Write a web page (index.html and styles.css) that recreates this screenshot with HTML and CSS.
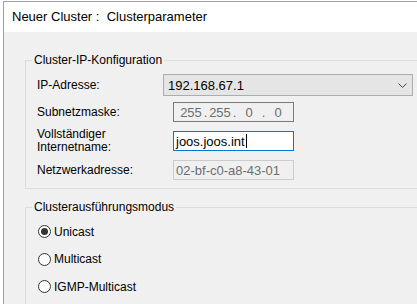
FILE: index.html
```html
<!DOCTYPE html>
<html lang="de">
<head>
    <meta charset="UTF-8">
    <title>Neuer Cluster : Clusterparameter</title>
    <link rel="stylesheet" href="styles.css">
</head>
<body>
    <div class="window">
        <div class="header">Neuer Cluster : &nbsp;Clusterparameter</div>
        <div class="content">
            <fieldset class="group">
                <legend>Cluster-IP-Konfiguration</legend>
                <div class="rows">
                    <label>IP-Adresse:</label>
                    <div class="combo">
                        <span>192.168.67.1</span>
                        <svg width="9" height="5" viewBox="0 0 9 5"><path d="M0.5 0.5 L4.5 4.5 L8.5 0.5" fill="none" stroke="#444" stroke-width="1"/></svg>
                    </div>

                    <label>Subnetzmaske:</label>
                    <div class="field ip">
                        <span class="octet">255</span><span class="dot">.</span>
                        <span class="octet">255</span><span class="dot">.</span>
                        <span class="octet">0</span><span class="dot">.</span>
                        <span class="octet">0</span>
                    </div>

                    <label class="two-line">Vollständiger<br>Internetname:</label>
                    <div class="field focus">joos.joos.int<span class="caret"></span></div>

                    <label>Netzwerkadresse:</label>
                    <div class="field disabled">02-bf-c0-a8-43-01</div>
                </div>
            </fieldset>

            <fieldset class="group mode">
                <legend>Clusterausführungsmodus</legend>
                <div class="radio checked"><span class="circle"></span>Unicast</div>
                <div class="radio"><span class="circle"></span>Multicast</div>
                <div class="radio"><span class="circle"></span>IGMP-Multicast</div>
            </fieldset>
        </div>
    </div>
</body>
</html>
```

FILE: styles.css
```css
html, body {
    margin: 0;
    height: 100%;
    overflow: hidden;
}
body {
    box-sizing: border-box;
    font-family: "Segoe UI", "Liberation Sans", Arial, sans-serif;
    font-size: 12px;
    color: #000;
    background: #fff;
    padding: 1px 0 0 3px;
}
.window {
    box-sizing: border-box;
    height: 100%;
    border-top: 1px solid #a0a0a0;
    border-left: 1px solid #a0a0a0;
    display: flex;
    flex-direction: column;
    overflow: hidden;
}
.header {
    background: #fff;
    height: 30px;
    line-height: 29px;
    padding-left: 8px;
    font-size: 13px;
    flex-shrink: 0;
}
.content {
    flex: 1;
    background: #f0f0f0;
    padding: 20px 0 0 21px;
}
.group {
    margin: 0;
    border: 1px solid #dcdcdc;
    border-right: none;
    padding: 0 0 0 11px;
}
.group legend {
    margin-left: -5px;
    padding: 0 2px;
    line-height: 16px;
}
.rows {
    display: grid;
    grid-template-columns: 126px 250px;
    grid-template-rows: 22px 20px 26px 20px;
    row-gap: 6px;
    align-items: center;
    padding: 6px 0 8px;
}
.rows label {
    line-height: 13px;
}
.combo {
    height: 22px;
    box-sizing: border-box;
    background: #e5e5e5;
    border: 1px solid #adadad;
    display: flex;
    align-items: center;
    justify-content: space-between;
    padding: 0 5px 0 4px;
    font-size: 13px;
}
.field {
    margin-left: 10px;
    width: 121px;
    height: 20px;
    box-sizing: border-box;
    border: 1px solid #7a7a7a;
    display: flex;
    align-items: center;
    padding-left: 2px;
}
.ip {
    color: #6d6d6d;
    background: #f0f0f0;
    padding-left: 6px;
    font-size: 13px;
}
.octet {
    width: 22px;
    text-align: center;
}
.dot {
    width: 7px;
    text-align: center;
}
.focus {
    background: #fff;
    border-color: #0078d7;
    font-size: 13px;
}
.caret {
    display: inline-block;
    width: 1px;
    height: 14px;
    background: #000;
    margin-left: 1px;
}
.disabled {
    border-color: #cccccc;
    color: #6d6d6d;
    font-size: 13px;
}
.mode {
    margin-top: 10px;
    padding: 3px 0 4px 11px;
}
.radio {
    display: flex;
    align-items: center;
    height: 27.5px;
    margin-left: 1px;
}
.circle {
    width: 11px;
    height: 11px;
    border: 1px solid #333;
    border-radius: 50%;
    background: #fff;
    margin-right: 3px;
    position: relative;
}
.checked .circle::after {
    content: "";
    position: absolute;
    left: 2px;
    top: 2px;
    width: 7px;
    height: 7px;
    border-radius: 50%;
    background: #333;
}
```
